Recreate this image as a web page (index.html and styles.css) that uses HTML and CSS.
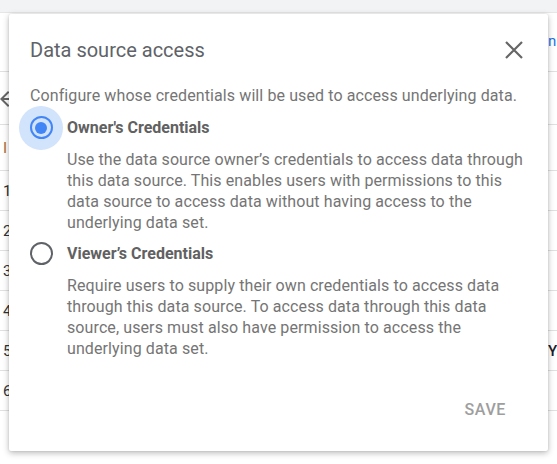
FILE: index.html
```html
<!DOCTYPE html>
<html>
<head>
<meta charset="utf-8">
<link rel="stylesheet" href="styles.css">
</head>
<body>
<div class="page">
  <div class="topbar"></div>
  <div class="table">
    <div class="row row-head"><span class="cell-left"></span><span class="cell-right head-text">n</span></div>
    <div class="row row-nav"><svg class="arrow" width="24" height="24" viewBox="0 0 24 24"><path d="M20 11H7.83l5.59-5.59L12 4l-8 8 8 8 1.41-1.41L7.83 13H20v-2z" fill="#666"/></svg><span class="cell-right"></span></div>
    <div class="row row-mid"><span class="cell-left brown">I</span><span class="cell-right"></span></div>
    <div class="row"><span class="cell-left">1</span><span class="cell-right"></span></div>
    <div class="row"><span class="cell-left">2</span><span class="cell-right"></span></div>
    <div class="row"><span class="cell-left">3</span><span class="cell-right"></span></div>
    <div class="row"><span class="cell-left">4</span><span class="cell-right"></span></div>
    <div class="row"><span class="cell-left">5</span><span class="cell-right dark">Y</span></div>
    <div class="row"><span class="cell-left">6</span><span class="cell-right"></span></div>
  </div>

  <div class="dialog">
    <div class="dialog-header">
      <h2 class="dialog-title">Data source access</h2>
      <svg class="close" width="18" height="18" viewBox="0 0 18 18"><path d="M1 1L17 17M17 1L1 17" stroke="#666" stroke-width="2.2" fill="none"/></svg>
    </div>
    <p class="intro">Configure whose credentials will be used to access underlying data.</p>
    <div class="option">
      <div class="option-row">
        <span class="radio-wrap checked"><span class="radio"><span class="dot"></span></span></span>
        <span class="option-label">Owner's Credentials</span>
      </div>
      <p class="option-desc">Use the data source owner’s credentials to access data through this data source. This enables users with permissions to this data source to access data without having access to the underlying data set.</p>
    </div>
    <div class="option">
      <div class="option-row">
        <span class="radio-wrap"><span class="radio"></span></span>
        <span class="option-label">Viewer’s Credentials</span>
      </div>
      <p class="option-desc">Require users to supply their own credentials to access data through this data source. To access data through this data source, users must also have permission to access the underlying data set.</p>
    </div>
    <div class="actions">
      <button class="save">SAVE</button>
    </div>
  </div>
</div>
</body>
</html>
```

FILE: styles.css
```css
* { box-sizing: border-box; }
html, body { margin: 0; padding: 0; }
body {
  font-family: Roboto, "Noto Sans", sans-serif;
  background: #fff;
  width: 557px;
  height: 464px;
  overflow: hidden;
}
.page {
  position: relative;
  width: 557px;
  height: 464px;
  overflow: hidden;
}
.topbar {
  height: 13px;
  background: #f1f3f4;
  border-bottom: 1px solid #e6e6e6;
}
.table {
  display: flex;
  flex-direction: column;
}
.row {
  height: 40px;
  border-bottom: 1px solid #e0e0e0;
  display: flex;
  justify-content: space-between;
  align-items: center;
  font-size: 15px;
  color: #333;
}
.row-head { height: 59px; }
.row-nav { height: 53px; }
.row-mid { height: 46px; }
.cell-left { padding-left: 3px; }
.cell-right { padding-right: 0; width: 9px; overflow: hidden; }
.head-text { color: #1a73e8; font-size: 15px; margin-bottom: 2px; }
.arrow { margin-left: -4px; margin-top: 2px; }
.brown { color: #b06a2a; }
.dark { color: #202124; font-weight: 500; margin-left: -2px; }

.dialog {
  position: absolute;
  left: 9px;
  top: 14px;
  width: 539px;
  height: 437px;
  background: #fff;
  border-radius: 2px;
  box-shadow: 0 2px 6px rgba(0,0,0,0.28), 0 0 2px rgba(0,0,0,0.12);
  padding: 24px 21px 0 21px;
  display: flex;
  flex-direction: column;
}
.dialog-header {
  display: flex;
  justify-content: space-between;
  align-items: center;
  height: 24px;
}
.dialog-title {
  margin: 0;
  font-size: 20px;
  font-weight: 400;
  color: #5f6368;
  line-height: 24px;
}
.close { margin-right: 4px; }
.intro {
  margin: 23px 0 0 0;
  font-size: 16px;
  line-height: 21px;
  color: #757575;
  letter-spacing: 0.1px;
}
.option { display: flex; flex-direction: column; }
.option-row {
  display: flex;
  align-items: center;
  height: 21px;
  margin-top: 11px;
}
.option + .option .option-row { margin-top: 10px; }
.radio-wrap {
  width: 44px;
  height: 44px;
  border-radius: 50%;
  display: flex;
  align-items: center;
  justify-content: center;
  margin-left: -11px;
  margin-right: 4px;
  flex-shrink: 0;
}
.radio-wrap.checked { background: #d2e3fc; }
.radio {
  width: 23px;
  height: 23px;
  border-radius: 50%;
  border: 2.5px solid #5f6368;
  display: flex;
  align-items: center;
  justify-content: center;
}
.checked .radio { border-color: #4285f4; }
.dot {
  width: 12px;
  height: 12px;
  border-radius: 50%;
  background: #4285f4;
}
.option-label {
  font-size: 16px;
  font-weight: 700;
  color: #616161;
  line-height: 21px;
}
.option-desc {
  margin: 11px 0 0 37px;
  font-size: 16px;
  line-height: 21px;
  color: #757575;
  letter-spacing: 0.1px;
}
.actions {
  display: flex;
  justify-content: flex-end;
  margin-top: 38px;
}
.save {
  font-family: Roboto, "Noto Sans", sans-serif;
  background: none;
  border: none;
  font-size: 16px;
  font-weight: 500;
  color: #9e9e9e;
  padding: 4px 21px;
  line-height: 18px;
  letter-spacing: 0.6px;
}
```
